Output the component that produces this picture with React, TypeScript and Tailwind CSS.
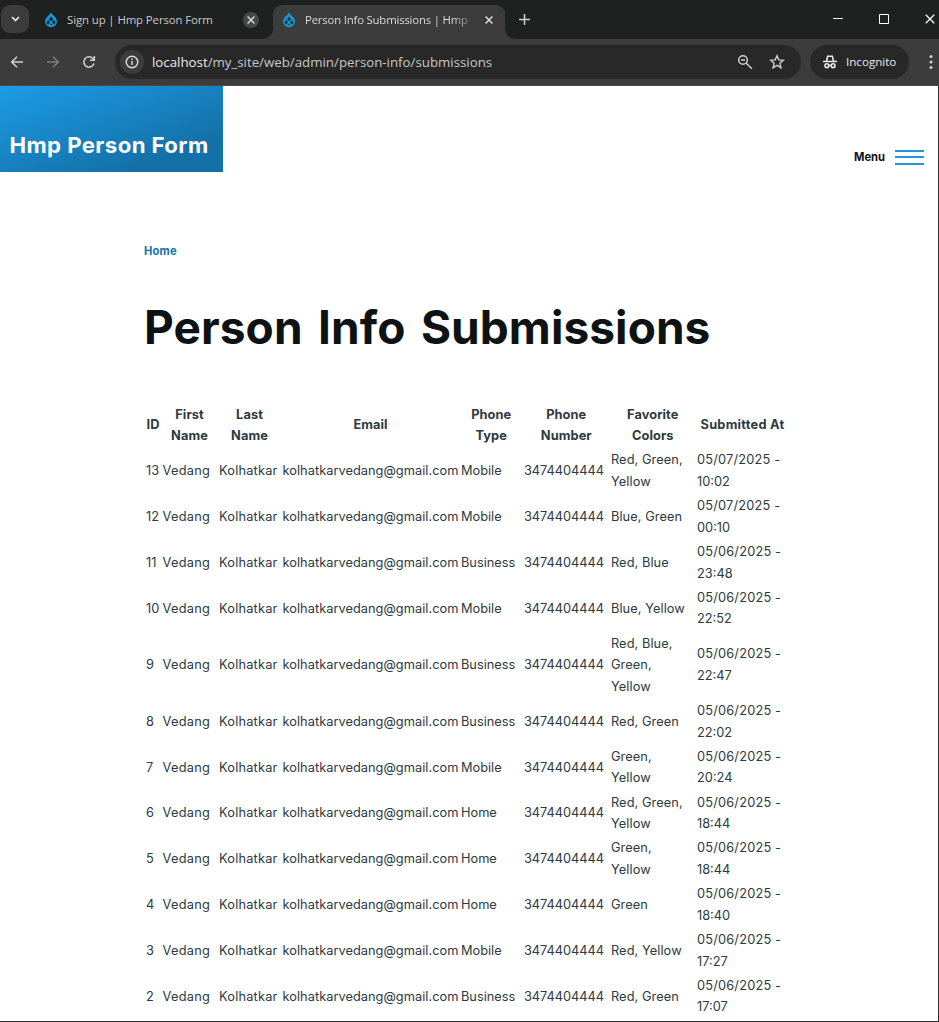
import type { ReactNode } from "react";

type Submission = { id: number; phone: string; colors: string[]; date: string; time: string };

const submissions: Submission[] = [
  { id: 13, phone: "Mobile", colors: ["Red, Green,", "Yellow"], date: "05/07/2025 -", time: "10:02" },
  { id: 12, phone: "Mobile", colors: ["Blue, Green"], date: "05/07/2025 -", time: "00:10" },
  { id: 11, phone: "Business", colors: ["Red, Blue"], date: "05/06/2025 -", time: "23:48" },
  { id: 10, phone: "Mobile", colors: ["Blue, Yellow"], date: "05/06/2025 -", time: "22:52" },
  { id: 9, phone: "Business", colors: ["Red, Blue,", "Green,", "Yellow"], date: "05/06/2025 -", time: "22:47" },
  { id: 8, phone: "Business", colors: ["Red, Green"], date: "05/06/2025 -", time: "22:02" },
  { id: 7, phone: "Mobile", colors: ["Green,", "Yellow"], date: "05/06/2025 -", time: "20:24" },
  { id: 6, phone: "Home", colors: ["Red, Green,", "Yellow"], date: "05/06/2025 -", time: "18:44" },
  { id: 5, phone: "Home", colors: ["Green,", "Yellow"], date: "05/06/2025 -", time: "18:44" },
  { id: 4, phone: "Home", colors: ["Green"], date: "05/06/2025 -", time: "18:40" },
  { id: 3, phone: "Mobile", colors: ["Red, Yellow"], date: "05/06/2025 -", time: "17:27" },
  { id: 2, phone: "Business", colors: ["Red, Green"], date: "05/06/2025 -", time: "17:07" },
];

const headings: string[][] = [
  ["ID"], ["First", "Name"], ["Last", "Name"], ["Email"],
  ["Phone", "Type"], ["Phone", "Number"], ["Favorite", "Colors"], ["Submitted At"],
];

const rowClass = "grid grid-cols-[16.5px_56.5px_63.500px_178.500px_63px_87px_86px_91px] items-center";

function Lines({ lines }: { lines: string[] }) {
  return <>{lines.map((line, i) => <span key={i} className="block">{line}</span>)}</>;
}

function DropletLogo({ hole }: { hole: string }) {
  return (
    <svg width="14" height="16" viewBox="0 0 14 16" fill="none" className="shrink-0">
      <path d="M7 .4C8.1 2.4 9.6 3.4 10.9 4.9c1.300 1.400 2 2.800 2 4.500A5.900 5.900 0 0 1 7 15.300 5.900 5.900 0 0 1 1.100 9.400c0-1.700.7-3.100 2-4.500C4.400 3.400 5.900 2.400 7 .4Z" fill="#0d9ddf" />
      <path d="M7 4.600 9.300 7.200 7 9.300 4.700 7.200Z" fill={hole} />
      <path d="M4.100 8.100 6.100 10.200 4.300 12.400C3.100 12.300 2.600 11.400 2.700 10.300 2.800 9.400 3.400 8.700 4.100 8.100Z" fill={hole} />
      <path d="M9.900 8.100 7.900 10.200 9.700 12.400C10.900 12.300 11.400 11.400 11.300 10.300 11.200 9.400 10.600 8.700 9.900 8.100Z" fill={hole} />
      <path d="M7 11.400 8.200 12.900Q7 13.600 5.800 12.900Z" fill={hole} />
    </svg>
  );
}

function Cross({ className, size = 8, weight = 1.4 }: { className: string; size?: number; weight?: number }) {
  return (
    <svg width={size} height={size} viewBox="0 0 8 8" fill="none" className={className}>
      <path d="M.6.6 7.400 7.400M7.400.6.6 7.400" stroke="currentColor" strokeWidth={weight} />
    </svg>
  );
}

function ToolIcon({ children, className = "" }: { children: ReactNode; className?: string }) {
  return (
    <svg width="16" height="16" viewBox="0 0 16 16" fill="none" stroke="currentColor" strokeWidth="1.600" className={`shrink-0 ${className}`}>
      {children}
    </svg>
  );
}

function TabStrip() {
  return (
    <div className="flex h-[39px] bg-[#1f2120] text-[11.4px] tracking-[-0.1px] text-[#c9cac9]">
      <button className="ml-px mt-[5px] flex h-7 w-7 items-center justify-center rounded-[9px] bg-[#3c3c3c]">
        <svg width="9" height="6" viewBox="0 0 9 6" fill="none"><path d="m1 1 3.500 3.500L8 1" stroke="#e8e8e8" strokeWidth="1.700" /></svg>
      </button>
      <div className="flex w-[234px] items-center pl-[15px]">
        <DropletLogo hole="#1f2120" />
        <span className="ml-[9px] w-[176px] whitespace-nowrap">Sign up | Hmp Person Form</span>
        <span className="flex h-4 w-4 items-center justify-center rounded-full bg-[#474848]"><Cross className="text-[#dadada]" /></span>
      </div>
      <svg width="10" height="39" viewBox="0 0 10 39"><path d="M0 39A10 10 0 0 0 10 29V39Z" fill="#3c3c3c" /></svg>
      <div className="mt-[5px] flex h-[34px] w-[232px] items-center rounded-t-[9px] bg-[#3c3c3c] pb-[5px] pl-[9px] text-[#e3e3e3]">
        <DropletLogo hole="#303336" />
        <span className="ml-[9px] w-[165px] whitespace-nowrap bg-gradient-to-r from-[#e3e3e3] from-90% to-[#6a6a6a] bg-clip-text tracking-[-0.2px] text-transparent">Person Info Submissions | Hmp</span>
        <Cross className="ml-[15px] text-[#e3e3e3]" />
      </div>
      <svg width="10" height="39" viewBox="0 0 10 39"><path d="M10 39A10 10 0 0 1 0 29V39Z" fill="#3c3c3c" /></svg>
      <svg width="11" height="11" viewBox="0 0 11 11" className="ml-[4px] mt-[14px]"><path d="M5.500 0V11M0 5.500H11" stroke="#d0d0d0" strokeWidth="1.500" /></svg>
      <div className="ml-auto flex h-[38px] items-center pr-[4px]">
        <svg width="10" height="10" viewBox="0 0 10 10"><path d="M0 4.500H10" stroke="#fff" /></svg>
        <svg width="10" height="10" viewBox="0 0 10 10" className="ml-9" fill="none"><path d="M.5.5H9.500V9.500H.5Z" stroke="#fff" /></svg>
        <Cross size={10} weight={1} className="ml-[36px] text-white" />
      </div>
    </div>
  );
}

function Toolbar() {
  return (
    <div className="flex h-[47px] items-center border-b border-[#4a4747] bg-[#3c3c3c] text-[#cfcfcf]">
      <ToolIcon className="ml-[9px]"><path d="M14 8H3M8 2.700 2.700 8 8 13.300" /></ToolIcon>
      <ToolIcon className="ml-[20px] text-[#7c7c7c]"><path d="M2 8H13M8 2.700 13.300 8 8 13.300" /></ToolIcon>
      <ToolIcon className="ml-[20px]"><path d="M13 9.500A5.200 5.200 0 1 1 12.300 5M13.300 2V6.200H9" /></ToolIcon>
      <div className="ml-[18px] flex h-[34px] w-[686px] items-center rounded-full bg-[#282828] pl-[5px]">
        <span className="flex h-6 w-6 items-center justify-center rounded-full bg-[#3c3c3c] text-[#dedede]">
          <ToolIcon><circle cx="8" cy="8" r="5.800" strokeWidth="1.400" /><path d="M8 7V11M8 4.500V6" strokeWidth="1.400" /></ToolIcon>
        </span>
        <span className="ml-[8px] whitespace-nowrap pt-px text-[13.3px] tracking-[-0.01px] text-[#c7c7c7]"><span className="text-[#ebebeb]">localhost</span>/my_site/web/admin/person-info/submissions</span>
        <ToolIcon className="ml-auto"><circle cx="6" cy="6" r="4.300" strokeWidth="1.500" /><path d="M9.300 9.300 14.800 14.800M4 6H8" strokeWidth="1.500" /></ToolIcon>
        <ToolIcon className="ml-[16px] mr-4"><path d="m8 1.800 1.800 4.100 4.500.4-3.400 3 1 4.400L8 11.400l-3.900 2.300 1-4.400-3.400-3 4.500-.4Z" strokeWidth="1.400" /></ToolIcon>
      </div>
      <div className="ml-[9px] flex h-[34px] w-[99px] items-center rounded-full bg-[#282828] pl-3 text-[#e8e8e8]">
        <ToolIcon>
          <path d="M4.600 7 5.600 2.200H10.400L11.400 7M1 7.500H15" strokeWidth="1.600" />
          <circle cx="4.900" cy="11.700" r="1.900" strokeWidth="1.600" /><circle cx="11.100" cy="11.700" r="1.900" strokeWidth="1.600" /><path d="M6.500 11.300H9.500" strokeWidth="1.400" />
        </ToolIcon>
        <span className="ml-[8px] text-[11.6px]">Incognito</span>
      </div>
      <svg width="4" height="16" viewBox="0 0 4 16" fill="#cfcfcf" className="ml-[20px] shrink-0"><circle cx="2" cy="2.500" r="1.500" /><circle cx="2" cy="8" r="1.500" /><circle cx="2" cy="13.500" r="1.500" /></svg>
    </div>
  );
}

export default function App() {
  return (
    <div className="flex h-[1022px] w-[939px] flex-col overflow-hidden bg-white">
      <div className="shrink-0 font-['Open_Sans',sans-serif]">
        <TabStrip />
        <Toolbar />
      </div>
      <div className="min-h-0 flex-1 overflow-hidden border-b border-r border-[#2b2b2b] font-['Inter',sans-serif] text-[#2e3940]">
        <header className="flex h-[86px] items-start justify-between">
          <div className="flex h-[86px] w-[223px] bg-[linear-gradient(160deg,#1d9ce8_0%,#1471a8_78%)] pl-[9.500px] pt-[45px] text-[22.200px] font-bold leading-[28px] tracking-[0.4px] text-white">
            <span className="whitespace-nowrap">Hmp Person Form</span>
          </div>
          <button className="mr-[14px] mt-[63px] flex items-center text-[11.2px] font-bold leading-4 text-[#0d1214]">
            Menu
            <span className="ml-[10px] flex h-[15px] w-[29px] flex-col justify-between">
              <span className="h-[2px] bg-[#2494db]" /><span className="h-[2px] bg-[#2494db]" /><span className="h-[2px] bg-[#2494db]" />
            </span>
          </button>
        </header>
        <main className="pl-[144px]">
          <nav className="pt-[71px] text-[11.2px] font-bold leading-4 tracking-[0.2px] text-[#1471a8]">Home</nav>
          <h1 className="mt-[40px] whitespace-nowrap text-[46px] font-bold leading-[56px] tracking-[0.07px] text-[#0d1214] [word-spacing:4.5px]">Person Info Submissions</h1>
          <table className="ml-[2px] mt-[47.300px] block text-[12.8px] leading-[21.600px]">
            <thead className="block">
              <tr className={`${rowClass} h-[45.800px]`}>
                {headings.map((lines, i) => (
                  <th key={i} className={`whitespace-nowrap text-center font-bold ${i === 7 ? "tracking-[0.25px]" : "pr-[2.500px] tracking-[0.08px]"}`}><Lines lines={lines} /></th>
                ))}
              </tr>
            </thead>
            <tbody className="block">
              {submissions.map((s) => (
                <tr key={s.id} className={`${rowClass} ${s.colors.length === 3 ? "h-[67.400px]" : "h-[45.800px]"}`}>
                  <td className="whitespace-nowrap">{s.id}</td>
                  <td className="tracking-[0.25px]">Vedang</td>
                  <td className="tracking-[0.2px]">Kolhatkar</td>
                  <td className="tracking-[0.03px]">kolhatkarvedang@gmail.com</td>
                  <td className="tracking-[-0.02px]">{s.phone}</td>
                  <td className="tracking-[-0.04px]">3474404444</td>
                  <td className="whitespace-nowrap tracking-[0.07px]"><Lines lines={s.colors} /></td>
                  <td className="whitespace-nowrap"><span className="block tracking-[0.18px]">{s.date}</span><span className="block">{s.time}</span></td>
                </tr>
              ))}
            </tbody>
          </table>
        </main>
      </div>
    </div>
  );
}
